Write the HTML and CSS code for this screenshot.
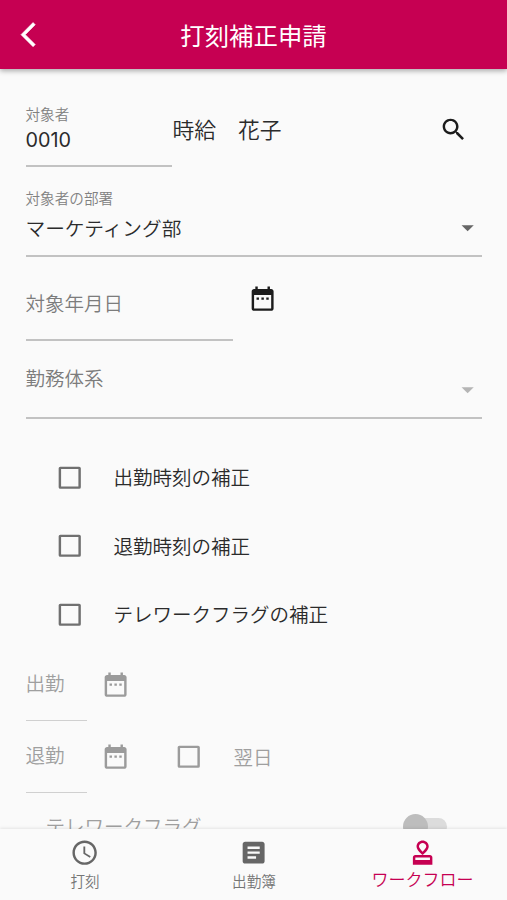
FILE: index.html
```html
<!DOCTYPE html>
<html lang="ja">
<head>
<meta charset="utf-8">
<title>打刻補正申請</title>
<link rel="stylesheet" href="styles.css">
</head>
<body>
<svg class="defs" aria-hidden="true">
  <symbol id="calendar" viewBox="0 0 24 24"><path d="M9 11H7v2h2v-2zm4 0h-2v2h2v-2zm4 0h-2v2h2v-2zm2-7h-1V2h-2v2H8V2H6v2H5c-1.11 0-1.99.9-1.99 2L3 20c0 1.1.89 2 2 2h14c1.1 0 2-.9 2-2V6c0-1.1-.9-2-2-2zm0 16H5V9h14v11z"/></symbol>
  <symbol id="arrow" viewBox="0 0 24 24"><path d="M7 10l5 5 5-5z"/></symbol>
  <symbol id="box" viewBox="0 0 24 24"><rect x="4" y="4" width="16.2" height="16.2" rx=".4" fill="none" stroke="currentColor" stroke-width="2"/></symbol>
</svg>
<header class="bar">
  <svg class="icon back" viewBox="0 0 24 24"><path d="M11.67 3.87L9.9 2.1 0 12l9.9 9.9 1.77-1.77L3.54 12z"/></svg>
  <h1 class="title">打刻補正申請</h1>
</header>
<main class="form">
  <div class="row person">
    <div class="field">
      <span class="caption">対象者</span>
      <span class="value code">0010</span>
    </div>
    <span class="name">時給　花子</span>
    <svg class="icon search" viewBox="0 0 24 24"><path d="M15.5 14h-.79l-.28-.27C15.41 12.59 16 11.11 16 9.5 16 5.91 13.09 3 9.5 3S3 5.91 3 9.5 5.91 16 9.5 16c1.61 0 3.09-.59 4.23-1.57l.27.28v.79l5 4.99L20.49 19l-4.99-5zm-6 0C7.01 14 5 11.99 5 9.5S7.01 5 9.5 5 14 7.01 14 9.5 11.99 14 9.5 14z"/></svg>
  </div>
  <div class="field dept">
    <span class="caption">対象者の部署</span>
    <div class="select">
      <span class="value">マーケティング部</span>
      <svg class="icon arrow"><use href="#arrow"/></svg>
    </div>
  </div>
  <div class="row date">
    <div class="field"><span class="hint">対象年月日</span></div>
    <svg class="icon"><use href="#calendar"/></svg>
  </div>
  <div class="field system">
    <span class="hint">勤務体系</span>
    <svg class="icon arrow off"><use href="#arrow"/></svg>
  </div>
  <div class="checks">
    <label class="check"><svg class="icon box"><use href="#box"/></svg>出勤時刻の補正</label>
    <label class="check"><svg class="icon box"><use href="#box"/></svg>退勤時刻の補正</label>
    <label class="check"><svg class="icon box"><use href="#box"/></svg>テレワークフラグの補正</label>
  </div>
  <div class="row time">
    <div class="field"><span class="hint">出勤</span></div>
    <svg class="icon"><use href="#calendar"/></svg>
  </div>
  <div class="row time">
    <div class="field"><span class="hint">退勤</span></div>
    <svg class="icon"><use href="#calendar"/></svg>
    <svg class="icon box"><use href="#box"/></svg>
    <span class="next">翌日</span>
  </div>
  <div class="row telework">
    <span>テレワークフラグ</span>
    <span class="switch"><span class="thumb"></span></span>
  </div>
</main>
<nav class="tabs">
  <div class="tab">
    <svg class="icon" viewBox="0 0 24 24"><path d="M11.99 2C6.47 2 2 6.48 2 12s4.47 10 9.99 10C17.52 22 22 17.52 22 12S17.52 2 11.99 2zM12 20c-4.42 0-8-3.58-8-8s3.58-8 8-8 8 3.58 8 8-3.58 8-8 8zm.5-13H11v6l5.25 3.15.75-1.23-4.5-2.67z"/></svg>
    <span>打刻</span>
  </div>
  <div class="tab">
    <svg class="icon" viewBox="0 0 24 24"><path d="M19 3H5c-1.1 0-2 .9-2 2v14c0 1.1.9 2 2 2h14c1.1 0 2-.9 2-2V5c0-1.1-.9-2-2-2zm-5 14H7v-2h7v2zm3-4H7v-2h10v2zm0-4H7V7h10v2z"/></svg>
    <span>出勤簿</span>
  </div>
  <div class="tab active">
    <svg class="icon" viewBox="0 0 24 24"><path fill-rule="evenodd" d="M4 16v6h16v-6c0-1.1-.9-2-2-2H6c-1.1 0-2 .9-2 2zm14 2H6v-2h12v2zM12 2C9.54 2 7 3.89 7 7c0 3.17 5 7 5 7s5-3.83 5-7c0-3.11-2.54-5-5-5zm0 9.33C10.45 9.79 9 7.8 9 7c0-2.01 1.64-3 3-3s3 1 3 3c0 .8-1.45 2.79-3 4.33z"/></svg>
    <span>ワークフロー</span>
  </div>
</nav>
</body>
</html>
```
FILE: styles.css
```css
* { box-sizing: border-box; }

body {
  margin: 0;
  width: 507px;
  height: 900px;
  display: flex;
  flex-direction: column;
  overflow: hidden;
  background: #fafafa;
  color: #2b2b2b;
  font: 350 19.5px/28px "Noto Sans CJK JP", sans-serif;
}

.defs { display: none; }

.icon {
  width: 29.25px;
  height: 29.25px;
  flex: none;
  fill: currentColor;
}

.bar {
  flex: none;
  height: 69px;
  padding: 0 20.5px;
  display: grid;
  grid-template-columns: 30px 1fr 30px;
  align-items: center;
  background: #c60052;
  color: #fff;
  box-shadow: 0 2px 5px rgba(0, 0, 0, .32);
  z-index: 1;
}

.back {
  margin-top: 1px;
  stroke: currentColor;
  stroke-width: .5;
  overflow: visible;
}

.title {
  margin: 0;
  text-align: center;
  font-size: 24.4px;
  font-weight: 400;
}

.form {
  flex: none;
  height: 760px;
  padding: 32px 25px 0 25.5px;
  overflow: hidden;
}

.row { display: flex; }

.field {
  display: flex;
  flex-direction: column;
  border-bottom: 2px solid #c2c2c2;
}

.caption {
  color: #818181;
  font-size: 14.6px;
  line-height: 24px;
}

.hint { color: #7c7c7c; }

.person { height: 66px; }
.person .field { width: 146.5px; padding-top: 1px; }
.code {
  padding-top: 1px;
  font-family: Inter, sans-serif;
  font-size: 19.8px;
  font-weight: 400;
  line-height: 26px;
}
.name { margin: 14px 0 0 .5px; font-size: 21.8px; }
.search { margin: 14px 14px 0 auto; color: #1c1c1c; }

.dept { height: 90px; padding-top: 19px; }
.select {
  display: flex;
  justify-content: space-between;
  align-items: center;
  padding-top: 3px;
}
.dept .value { font-size: 19.7px; }
.arrow { color: #666; }
.arrow.off { color: #b5b5b5; }

.date { height: 84px; }
.date .field { width: 207.5px; padding-top: 32px; }
.date .icon { margin: 27px 0 0 14.5px; color: #1c1c1c; }

.system {
  height: 78px;
  padding-top: 23px;
  flex-direction: row;
  justify-content: space-between;
}
.system .arrow { margin-top: 11px; }

.checks { padding: 24px 0 0 29.2px; }
.check {
  height: 68.5px;
  display: flex;
  align-items: center;
  gap: 29.6px;
}
.box { color: #707070; }

.time { height: 72px; color: #9b9b9b; }
.time .field { width: 61px; padding-top: 20px; border-bottom: 1px solid #d0d0d0; }
.time .hint { color: #9f9f9f; }
.time .icon { margin: 21px 0 0 14.5px; }
.time .box { margin: 21.5px 0 0 44px; color: #9b9b9b; }
.time .next { margin: 22px 0 0 30px; color: #9f9f9f; }

.telework {
  height: 60px;
  padding: 19px 35px 0 20px;
  justify-content: space-between;
  color: #9f9f9f;
}
.switch {
  position: relative;
  width: 35px;
  height: 17px;
  margin-top: 6px;
  border-radius: 9px;
  background: #dcdcdc;
}
.thumb {
  position: absolute;
  left: -9.5px;
  top: -4px;
  width: 25px;
  height: 25px;
  border-radius: 50%;
  background: #bdbdbd;
}

.tabs {
  flex: none;
  height: 71px;
  display: grid;
  grid-template-columns: repeat(3, 1fr);
  background: #fafafa;
  box-shadow: 0 -1px 3px rgba(0, 0, 0, .09);
  z-index: 1;
}
.tab {
  display: flex;
  flex-direction: column;
  align-items: center;
  padding: 9px 0 0 1px;
  color: #757575;
  font-size: 14.6px;
}
.tab .icon { color: #666; }
.tab.active,
.tab.active .icon { color: #c60052; }
.tab.active { font-size: 17px; padding-left: 0; }
.tab.active span { margin-top: -2px; }
```
